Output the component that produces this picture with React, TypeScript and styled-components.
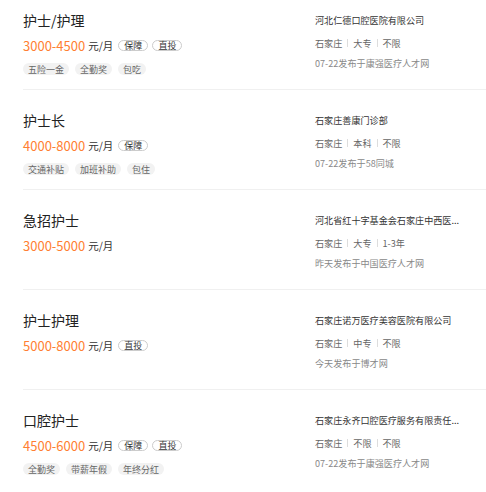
import * as React from 'react'
import styled, { createGlobalStyle } from 'styled-components'

const GlobalStyle = createGlobalStyle`
  html, body {
    margin: 0;
    padding: 0;
    overflow: hidden;
    background: #fff;
  }
  body {
    font-family: "Noto Sans CJK SC", "Noto Sans", sans-serif;
    color: #333;
  }
`

type Job = {
  title: string
  salary: string
  badges: string[]
  tags: string[]
  company: string
  city: string
  edu: string
  exp: string
  published: string
}

const jobs: Job[] = [
  {
    title: '护士/护理',
    salary: '3000-4500',
    badges: ['保障', '直投'],
    tags: ['五险一金', '全勤奖', '包吃'],
    company: '河北仁德口腔医院有限公司',
    city: '石家庄',
    edu: '大专',
    exp: '不限',
    published: '07-22发布于康强医疗人才网'
  },
  {
    title: '护士长',
    salary: '4000-8000',
    badges: ['保障'],
    tags: ['交通补贴', '加班补助', '包住'],
    company: '石家庄善康门诊部',
    city: '石家庄',
    edu: '本科',
    exp: '不限',
    published: '07-22发布于58同城'
  },
  {
    title: '急招护士',
    salary: '3000-5000',
    badges: [],
    tags: [],
    company: '河北省红十字基金会石家庄中西医...',
    city: '石家庄',
    edu: '大专',
    exp: '1-3年',
    published: '昨天发布于中国医疗人才网'
  },
  {
    title: '护士护理',
    salary: '5000-8000',
    badges: ['直投'],
    tags: [],
    company: '石家庄诺万医疗美容医院有限公司',
    city: '石家庄',
    edu: '中专',
    exp: '不限',
    published: '今天发布于博才网'
  },
  {
    title: '口腔护士',
    salary: '4500-6000',
    badges: ['保障', '直投'],
    tags: ['全勤奖', '带薪年假', '年终分红'],
    company: '石家庄永齐口腔医疗服务有限责任...',
    city: '石家庄',
    edu: '不限',
    exp: '不限',
    published: '07-22发布于康强医疗人才网'
  }
]

const S = {
  List: styled.ul`
    list-style: none;
    margin: 0;
    padding: 0 0 0 23px;
  `,
  Item: styled.li<{ $last?: boolean }>`
    display: flex;
    box-sizing: border-box;
    height: 90px;
    padding-top: 10px;
    margin-bottom: 10px;
    border-bottom: 1px solid ${(p) => (p.$last ? 'transparent' : '#f0f0f0')};
  `,
  Left: styled.div`
    width: 292px;
    flex-shrink: 0;
  `,
  Title: styled.h3`
    margin: 0;
    font-size: 14px;
    font-weight: normal;
    line-height: 20px;
    color: #222;
  `,
  SalaryLine: styled.div`
    display: flex;
    align-items: center;
    height: 16px;
    margin-top: 7px;
  `,
  Salary: styled.span`
    font-size: 13px;
    color: #ff7f32;
  `,
  Unit: styled.span`
    font-size: 10.5px;
    color: #333;
    margin-left: 3px;
    margin-right: 1px;
  `,
  Badge: styled.span`
    display: inline-flex;
    align-items: center;
    box-sizing: border-box;
    height: 11px;
    padding: 0 5px;
    margin-left: 4px;
    border: 1px solid #ccc;
    border-radius: 6px;
    font-size: 9px;
    line-height: 1;
    color: #333;
  `,
  Tags: styled.div`
    display: flex;
    gap: 6px;
    margin-top: 10px;
  `,
  Tag: styled.span`
    display: inline-flex;
    align-items: center;
    height: 12px;
    padding: 0 5px;
    border-radius: 6px;
    background: #f2f2f2;
    font-size: 9px;
    line-height: 1;
    color: #666;
  `,
  Right: styled.div`
    flex: 1;
    min-width: 0;
    padding-right: 20px;
  `,
  Company: styled.div`
    font-size: 9.1px;
    line-height: 20px;
    color: #333;
    white-space: nowrap;
  `,
  Meta: styled.div`
    display: flex;
    align-items: center;
    height: 14px;
    margin-top: 6px;
    font-size: 9.1px;
    color: #666;
  `,
  Sep: styled.i`
    width: 1px;
    height: 8px;
    margin: 0 5px;
    background: #ddd;
  `,
  Published: styled.div`
    height: 14px;
    line-height: 14px;
    margin-top: 6px;
    font-size: 9.1px;
    color: #888;
  `
}

export default function App() {
  return (
    <>
      <GlobalStyle />
      <S.List>
        {jobs.map((job, i) => (
          <S.Item key={i} $last={i === jobs.length - 1}>
            <S.Left>
              <S.Title>{job.title}</S.Title>
              <S.SalaryLine>
                <S.Salary>{job.salary}</S.Salary>
                <S.Unit>元/月</S.Unit>
                {job.badges.map((b) => (
                  <S.Badge key={b}>{b}</S.Badge>
                ))}
              </S.SalaryLine>
              {job.tags.length > 0 && (
                <S.Tags>
                  {job.tags.map((t) => (
                    <S.Tag key={t}>{t}</S.Tag>
                  ))}
                </S.Tags>
              )}
            </S.Left>
            <S.Right>
              <S.Company>{job.company}</S.Company>
              <S.Meta>
                <span>{job.city}</span>
                <S.Sep />
                <span>{job.edu}</span>
                <S.Sep />
                <span>{job.exp}</span>
              </S.Meta>
              <S.Published>{job.published}</S.Published>
            </S.Right>
          </S.Item>
        ))}
      </S.List>
    </>
  )
}
